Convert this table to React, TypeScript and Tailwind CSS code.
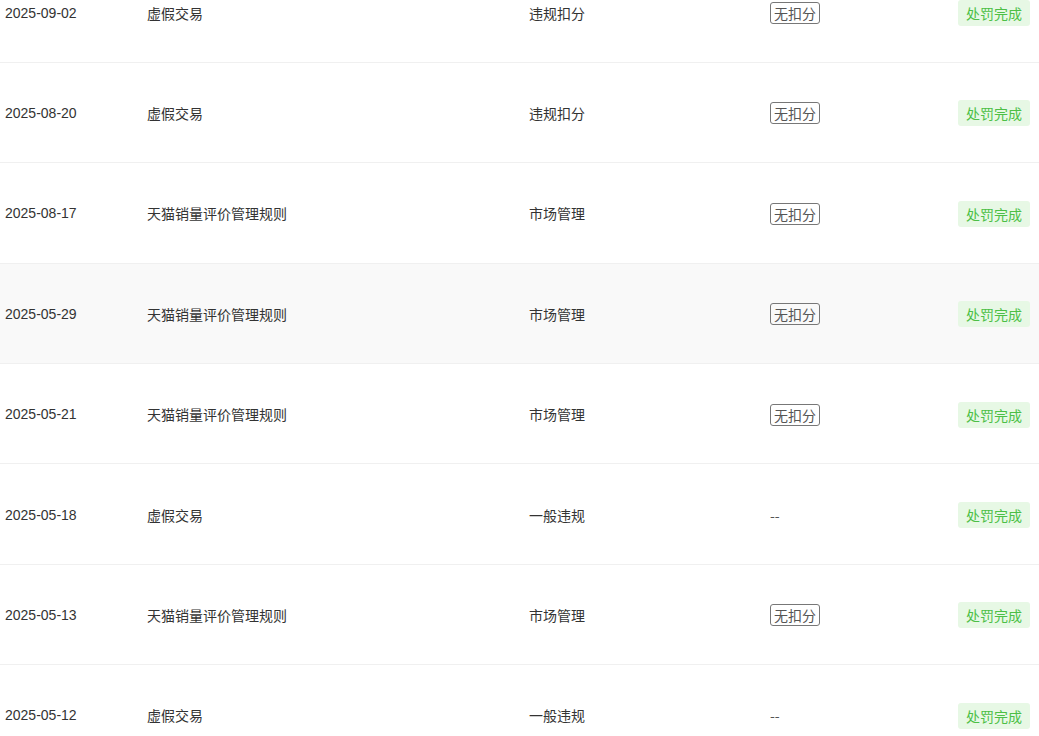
import React from "react";

type Record = {
  date: string;
  rule: string;
  kind: string;
  deduct: boolean;
};

const records: Record[] = [
  { date: "2025-09-02", rule: "虚假交易", kind: "违规扣分", deduct: true },
  { date: "2025-08-20", rule: "虚假交易", kind: "违规扣分", deduct: true },
  { date: "2025-08-17", rule: "天猫销量评价管理规则", kind: "市场管理", deduct: true },
  { date: "2025-05-29", rule: "天猫销量评价管理规则", kind: "市场管理", deduct: true },
  { date: "2025-05-21", rule: "天猫销量评价管理规则", kind: "市场管理", deduct: true },
  { date: "2025-05-18", rule: "虚假交易", kind: "一般违规", deduct: false },
  { date: "2025-05-13", rule: "天猫销量评价管理规则", kind: "市场管理", deduct: true },
  { date: "2025-05-12", rule: "虚假交易", kind: "一般违规", deduct: false },
];

const cjk = "font-['Microsoft_YaHei','Noto_Sans_CJK_SC',sans-serif]";

const Row: React.FC<{ item: Record; hover?: boolean }> = ({ item, hover }) => (
  <div
    className={`flex h-[100.4px] items-center border-b border-[#f0f0f0] pt-[2px] text-[14px] text-[#333] ${
      hover ? "bg-[#f9f9f9]" : "bg-white"
    }`}
  >
    <div className="w-[147px] pl-[5px] font-['Liberation_Sans',Arial,sans-serif]">{item.date}</div>
    <div className={`w-[382px] ${cjk}`}>{item.rule}</div>
    <div className={`w-[241px] ${cjk}`}>{item.kind}</div>
    <div className={`w-[187px] ${cjk}`}>
      {item.deduct ? (
        <span className="inline-block rounded-[3px] border border-[#777] px-[3px] leading-[20px] text-[#555]">
          无扣分
        </span>
      ) : (
        <span className="text-[#555]">--</span>
      )}
    </div>
    <div className="flex flex-1 justify-end pr-[9px]">
      <span className={`rounded-[3px] bg-[#e7f8e5] px-[8px] py-[4px] leading-[18px] text-[#4cbf46] ${cjk}`}>
        处罚完成
      </span>
    </div>
  </div>
);

const App: React.FC = () => {
  return (
    <div className="h-[736px] w-full overflow-hidden bg-white">
      <div className="-mt-[37.6px]">
        {records.map((r, i) => (
          <Row key={r.date} item={r} hover={i === 3} />
        ))}
      </div>
    </div>
  );
};

export default App;
